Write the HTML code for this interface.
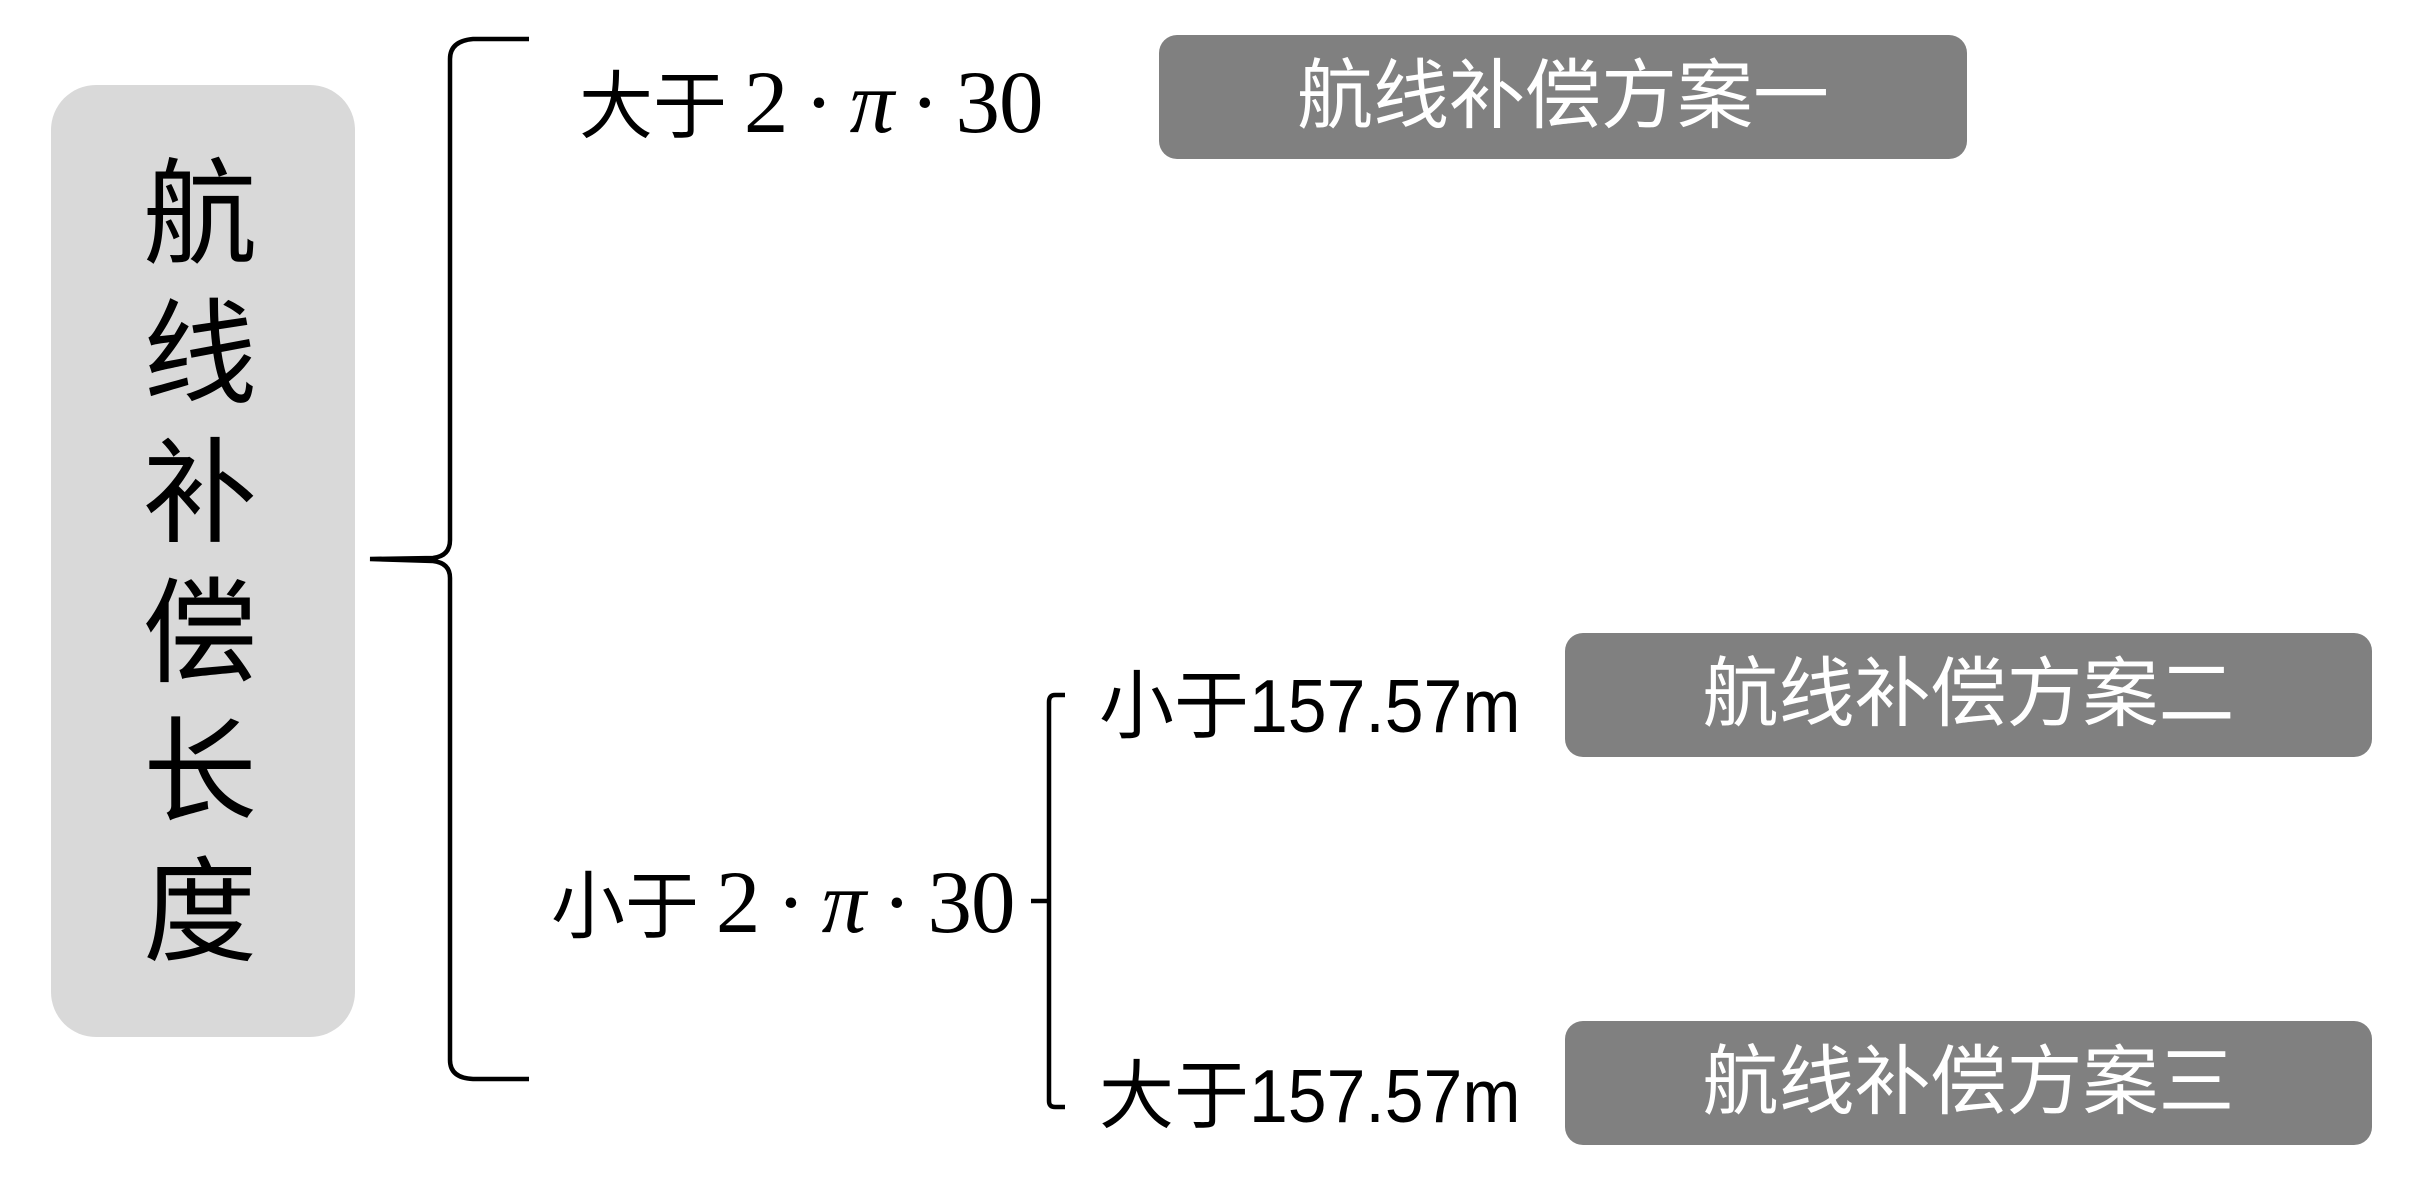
<!DOCTYPE html>
<html><head><meta charset="utf-8"><style>
html,body{margin:0;padding:0;background:#fff;}
body{width:2420px;height:1194px;position:relative;overflow:hidden;font-family:"Liberation Sans","Noto Sans CJK SC",sans-serif;}
.lb{position:absolute;left:51px;top:85px;width:304px;height:952px;background:#d9d9d9;border-radius:45px;}
.vc{position:absolute;left:140px;width:120px;text-align:center;font-size:114px;line-height:140px;color:#000;}
.box{position:absolute;background:#808080;border-radius:18px;color:#fff;font-size:76px;text-align:center;line-height:124px;height:124px;}
.t{position:absolute;color:#000;white-space:nowrap;line-height:100px;}
.m{font-family:"Liberation Serif",serif;font-size:89px;letter-spacing:-1px;}
.m .c{font-family:"Liberation Sans","Noto Sans CJK SC",sans-serif;font-size:74px;letter-spacing:0;}
.s{font-size:75px;}
.s .n{display:inline-block;transform:scaleX(0.93);transform-origin:left center;}
</style></head><body>
<div class="lb"></div>
<div class="vc" style="top:146px">航</div>
<div class="vc" style="top:286px">线</div>
<div class="vc" style="top:425px">补</div>
<div class="vc" style="top:565px">偿</div>
<div class="vc" style="top:704px">长</div>
<div class="vc" style="top:844px">度</div>

<svg width="2420" height="1194" style="position:absolute;left:0;top:0" fill="none" stroke="#000" stroke-width="4.5">
<path d="M529 39 L473 39 Q450 41 450 59 L450 540 Q450 556 433 558 L370 559 L433 561 Q450 563 450 578 L450 1060 Q450 1078 473 1079 L529 1079"/>
<path d="M1065 695 L1055 695 Q1049 695 1049 702 L1049 1101 Q1049 1107 1055 1107 L1065 1107 M1031 901 L1049 901"/>
</svg>

<div class="t m" style="left:579px;top:53px"><span class="c">大于</span>&#8201;2&#8201;·&#8201;<i>π</i>&#8201;·&#8201;30</div>
<div class="t m" style="left:551px;top:853px"><span class="c">小于</span>&#8201;2&#8201;·&#8201;<i>π</i>&#8201;·&#8201;30</div>

<div class="t s" style="left:1099px;top:656px">小于<span class="n">157.57m</span></div>
<div class="t s" style="left:1099px;top:1046px">大于<span class="n">157.57m</span></div>

<div class="box" style="left:1159px;top:35px;width:808px">航线补偿方案一</div>
<div class="box" style="left:1565px;top:633px;width:807px">航线补偿方案二</div>
<div class="box" style="left:1565px;top:1021px;width:807px">航线补偿方案三</div>
</body></html>
